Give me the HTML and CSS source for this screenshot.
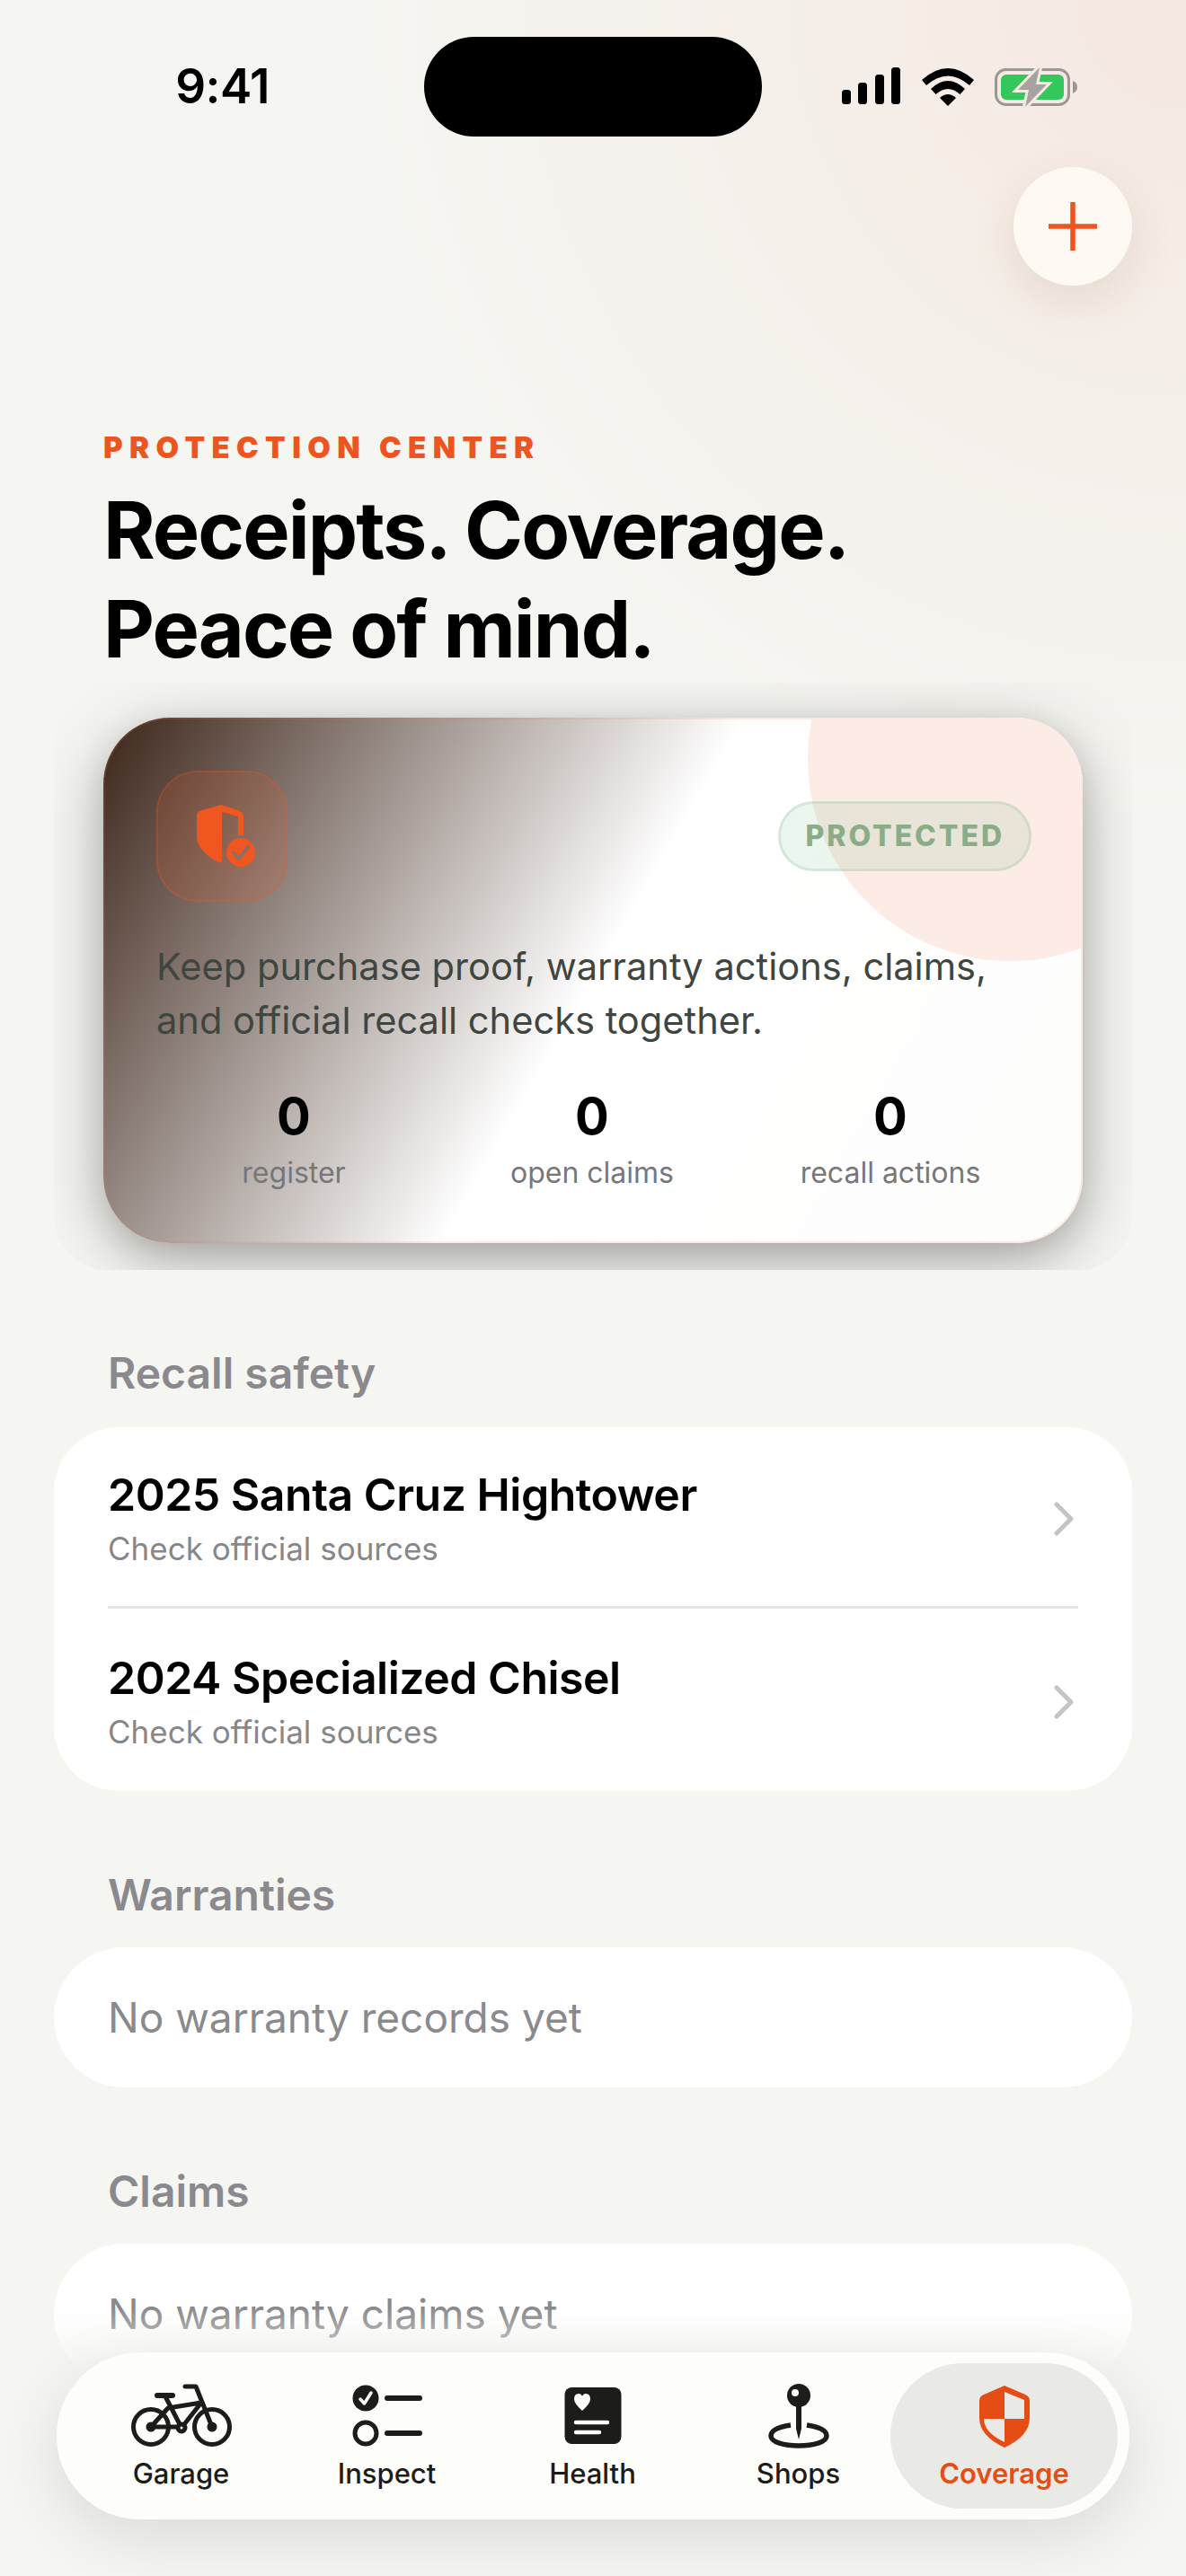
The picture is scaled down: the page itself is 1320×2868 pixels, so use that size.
FILE: index.html
```html
<!DOCTYPE html>
<html lang="en">
<head>
    <meta charset="UTF-8">
    <meta name="viewport" content="width=device-width, initial-scale=1.0">
    <title>Protection Center</title>
    <link rel="stylesheet" href="styles.css">
</head>
<body>
<div class="phone">
    <div class="status-bar">
        <div class="time">9:41</div>
        <div class="island"></div>
        <div class="status-icons">
            <svg width="66" height="42" viewBox="0 0 66 42"><rect x="0" y="25" width="10" height="16" rx="3.5"/><rect x="18" y="17" width="10" height="24" rx="3.5"/><rect x="37" y="8" width="10" height="33" rx="3.5"/><rect x="55" y="0" width="10" height="41" rx="3.5"/></svg>
            <svg width="58" height="44" viewBox="0 0 58 44"><path d="M0 14 Q29 -12 58 14 L53 20 Q29 -1 5 20Z"/><path d="M10 24 Q29 6 48 24 L42.500 30 Q29 18 15.500 30Z"/><path d="M20 34 Q29 26 38 34 L29 43Z"/></svg>
            <svg width="93" height="44" viewBox="0 0 93 44"><rect x="1.500" y="2.500" width="81" height="39" rx="11" fill="none" stroke="#9c9792" stroke-width="3"/><rect x="7" y="8" width="70" height="28" rx="6" fill="#34c759"/><path d="M87 15 Q92 17 92 22 Q92 27 87 29Z" fill="#9c9792"/><path d="M50 0 L26 25 H38 L34 44 L58 19 H46Z" fill="#a8a3a0" stroke="#f4ebe5" stroke-width="6" paint-order="stroke"/></svg>
        </div>
    </div>

    <div class="action-row">
        <button class="add-btn">
            <svg width="54" height="54" viewBox="0 0 54 54"><path d="M27 1V53M1 27H53" stroke="#ee5420" stroke-width="5.500" stroke-linecap="round"/></svg>
        </button>
    </div>

    <div class="page-head">
        <div class="eyebrow">PROTECTION CENTER</div>
        <h1>Receipts. Coverage.<br>Peace of mind.</h1>
    </div>

    <div class="hero-clip">
        <div class="hero">
            <div class="hero-blob"></div>
            <div class="hero-top">
                <div class="hero-icon">
                    <svg class="hero-shield" width="66" height="70" viewBox="0 0 66 70"><path d="M27 0 L46 6 Q52 8 52 14 V34 H46 V13 L28 8 V63 L26 65 Q0 52 0 35 V11 Q0 7 6 6Z" fill="#f0561f"/><circle cx="49" cy="53" r="16" fill="#f0561f"/><path d="M41 53 L47 60 L57 47" fill="none" stroke="#8d6f60" stroke-width="4" stroke-linecap="round" stroke-linejoin="round"/></svg>
                </div>
                <div class="badge">PROTECTED</div>
            </div>
            <p class="hero-text">Keep purchase proof, warranty actions, claims, and official recall checks together.</p>
            <div class="stats">
                <div class="stat"><b>0</b><span>register</span></div>
                <div class="stat"><b>0</b><span>open claims</span></div>
                <div class="stat"><b>0</b><span>recall actions</span></div>
            </div>
        </div>
    </div>

    <h2 class="section-title first">Recall safety</h2>
    <div class="list-card">
        <div class="row">
            <div>
                <div class="row-title">2025 Santa Cruz Hightower</div>
                <div class="row-sub">Check official sources</div>
            </div>
            <svg class="chevron" width="24" height="38" viewBox="0 0 24 38"><path d="M4 3L20 19L4 35" fill="none" stroke="#c4c4c6" stroke-width="5" stroke-linecap="round" stroke-linejoin="round"/></svg>
        </div>
        <div class="row">
            <div>
                <div class="row-title">2024 Specialized Chisel</div>
                <div class="row-sub">Check official sources</div>
            </div>
            <svg class="chevron" width="24" height="38" viewBox="0 0 24 38"><path d="M4 3L20 19L4 35" fill="none" stroke="#c4c4c6" stroke-width="5" stroke-linecap="round" stroke-linejoin="round"/></svg>
        </div>
    </div>

    <h2 class="section-title">Warranties</h2>
    <div class="empty-card">No warranty records yet</div>

    <h2 class="section-title">Claims</h2>
    <div class="empty-card">No warranty claims yet</div>

    <div class="bottom-fade"></div>

    <nav class="tab-bar">
        <div class="tab">
            <svg width="112" height="72" viewBox="0 0 112 72" fill="none" stroke="#1c1c19" stroke-width="5" stroke-linecap="round" stroke-linejoin="round"><circle cx="22" cy="48" r="19.500"/><circle cx="90" cy="48" r="19.500"/><path d="M60 3H72L90 48"/><path d="M29 13H46" stroke-width="6"/><path d="M38 14L56 49L78 21L41 27L22 48H56"/><circle cx="56" cy="49" r="4" fill="#fdfdfa"/><circle cx="22" cy="48" r="3" fill="#1c1c19"/><circle cx="90" cy="48" r="3" fill="#1c1c19"/></svg>
            <span>Garage</span>
        </div>
        <div class="tab">
            <svg width="80" height="72" viewBox="0 0 80 72" fill="none" stroke-linecap="round"><circle cx="16" cy="16" r="14.500" fill="#1c1c19"/><path d="M10 17L14.500 22L22 10" stroke="#fdfdfa" stroke-width="3.500" stroke-linejoin="round"/><circle cx="16" cy="55" r="12" stroke="#1c1c19" stroke-width="5"/><path d="M40 16H76M40 55H76" stroke="#1c1c19" stroke-width="6"/></svg>
            <span>Inspect</span>
        </div>
        <div class="tab">
            <svg width="64" height="72" viewBox="0 0 64 72"><rect x="0.500" y="4" width="63" height="63" rx="8" fill="#1c1c19"/><path d="M20 30 Q11 22 11 17 Q11 11 16 11 Q19 11 20 14 Q21 11 24 11 Q29 11 29 17 Q29 22 20 30Z" fill="#fdfdfa"/><path d="M13 43H48M13 54H39" stroke="#fdfdfa" stroke-width="4.500" stroke-linecap="round"/></svg>
            <span>Health</span>
        </div>
        <div class="tab">
            <svg width="68" height="72" viewBox="0 0 68 72" fill="none"><path d="M25 46C12 48 3 52 3 58C3 65 18 69 34 69C50 69 65 65 65 58C65 52 56 48 43 46" stroke="#1c1c19" stroke-width="5.500"/><path d="M31 20H37V50L34 62L31 50Z" fill="#1c1c19"/><circle cx="34" cy="13" r="13" fill="#1c1c19"/><circle cx="30" cy="10" r="4" fill="#fdfdfa"/></svg>
            <span>Shops</span>
        </div>
        <div class="tab active">
            <svg width="58" height="72" viewBox="0 0 58 72"><path d="M29 2 L52 12 Q57 14 57 19 V38 Q57 58 29 71 Q1 58 1 38 V19 Q1 14 6 12Z" fill="#e64d14"/><path d="M29 9 L51 18 V39 H29Z M29 39 V65 Q6 54 6 39Z" fill="#e9e9e6"/></svg>
            <span>Coverage</span>
        </div>
    </nav>
</div>
</body>
</html>
```

FILE: styles.css
```css
* { box-sizing: border-box; }
html, body { margin: 0; padding: 0; }
body { font-family: Inter, "Noto Sans", sans-serif; background-color: #f5f5f1; color: #000; }
h1, h2, p { margin: 0; }

.phone {
    position: relative;
    width: 1320px;
    height: 2868px;
    overflow: hidden;
    background:
        radial-gradient(circle 900px at 1320px 0, #f5e8e0 0%, rgba(245, 236, 229, 0.7) 45%, rgba(245, 245, 241, 0) 100%),
        #f5f5f1;
}

/* status bar */
.status-bar { display: grid; grid-template-columns: 472px 376px 1fr; padding-top: 41px; height: 152px; }
.time { font-size: 53px; font-weight: 600; text-align: right; padding-right: 172px; line-height: 111px; letter-spacing: -0.5px; white-space: nowrap; }
.island { height: 111px; background-color: #000; border-radius: 56px; }
.status-icons { display: flex; align-items: flex-start; gap: 23px; padding: 34px 0 0 89px; }

/* add button */
.action-row { display: flex; justify-content: flex-end; padding: 34px 60px 0; }
.add-btn { width: 132px; height: 132px; padding: 0; border: none; border-radius: 50%; background-color: #fff9f3; box-shadow: 0 18px 50px rgba(120, 70, 40, 0.12); display: flex; align-items: center; justify-content: center; }

/* heading */
.page-head { padding: 162px 115px 0; }
.eyebrow { font-size: 33px; line-height: 36px; font-weight: 900; color: #ee5420; letter-spacing: 7.400px; white-space: nowrap; }
h1 { font-size: 88px; line-height: 110px; font-weight: 700; letter-spacing: -1.900px; margin-top: 19px; }

/* hero card */
.hero-clip { position: relative; margin: 5px 60px 0; padding: 39px 55px 30px; border-radius: 60px; overflow: hidden; }
.hero {
    position: relative;
    height: 585px;
    padding: 57px 55px 0 57px;
    border-radius: 74px;
    overflow: hidden;
    border: 2px solid rgba(238, 120, 80, 0.14);
    background: linear-gradient(120deg, #3c251a 0%, #ffffff 50%, #fdfdfc 100%) border-box;
    box-shadow: 0 12px 34px rgba(0, 0, 0, 0.14), 0 20px 80px rgba(0, 0, 0, 0.26);
}
.hero-blob { position: absolute; top: -181px; right: -146px; width: 450px; height: 450px; border-radius: 50%; background-color: #fcece5; }
.hero-top { position: relative; display: flex; justify-content: space-between; align-items: center; }
.hero-icon { width: 146px; height: 146px; border-radius: 46px; border: 2px solid rgba(240, 86, 31, 0.25); background-color: rgba(240, 86, 31, 0.15); display: flex; align-items: center; justify-content: center; }
.hero-shield { margin-left: 10px; }
.badge { height: 78px; padding: 0 27px; border-radius: 39px; border: 3px solid rgba(120, 170, 130, 0.2); background-color: rgba(110, 190, 140, 0.14); color: #8aad88; font-size: 32px; font-weight: 800; letter-spacing: 2.950px; line-height: 72px; }
.hero-text { position: relative; margin-top: 42px; font-size: 41.600px; line-height: 60px; color: #3f463f; }
.stats { position: relative; display: grid; grid-template-columns: repeat(3, 332px); margin: 42px 0 0 -13px; }
.stat { display: flex; flex-direction: column; align-items: center; }
.stat b { font-size: 56px; line-height: 70px; font-weight: 700; }
.stat span { font-size: 32px; line-height: 44px; color: #77777a; margin-top: 6px; }

/* sections */
.section-title { font-size: 48px; line-height: 60px; font-weight: 600; color: #8a8a8e; margin: 86px 120px 0; }
.section-title.first { margin-top: 85px; }
.list-card { margin: 30px 60px 0; padding: 0 60px; background-color: #fff; border-radius: 72px; }
.row { height: 202px; display: flex; align-items: center; justify-content: space-between; padding-right: 4px; border-bottom: 3px solid #e5e5e5; }
.row:last-child { height: 203px; border-bottom: none; }
.row-title { font-size: 50px; line-height: 64px; font-weight: 600; letter-spacing: -0.5px; margin-top: 2px; }
.row-sub { font-size: 35px; line-height: 46px; color: #87878a; margin-top: 5px; }
.chevron { margin-top: 4px; }
.empty-card { margin: 28px 60px 0; height: 156px; padding: 0 60px; display: flex; align-items: center; background-color: #fff; border-radius: 78px; font-size: 46px; color: #8a8a8e; }

/* bottom of the screen */
.bottom-fade { position: absolute; left: 0; right: 0; top: 2570px; bottom: 0; background: linear-gradient(to bottom, rgba(245, 245, 241, 0) 0, #f5f5f1 75px); }
.tab-bar { position: absolute; left: 63px; bottom: 63px; width: 1194px; height: 186px; padding: 12px 13px 12px 24px; display: flex; border-radius: 93px; background-color: #fdfdfa; box-shadow: 0 20px 70px rgba(0, 0, 0, 0.11); }
.tab { width: 229px; display: flex; flex-direction: column; align-items: center; padding-top: 23px; color: #1c1c19; font-size: 31px; font-weight: 500; }
.tab svg { display: block; }
.tab span { margin-top: 8px; line-height: 40px; }
.tab.active { width: 253px; margin: 0 -12px; border-radius: 81px; background-color: #e9e9e6; color: #e64d14; font-weight: 600; }
```
